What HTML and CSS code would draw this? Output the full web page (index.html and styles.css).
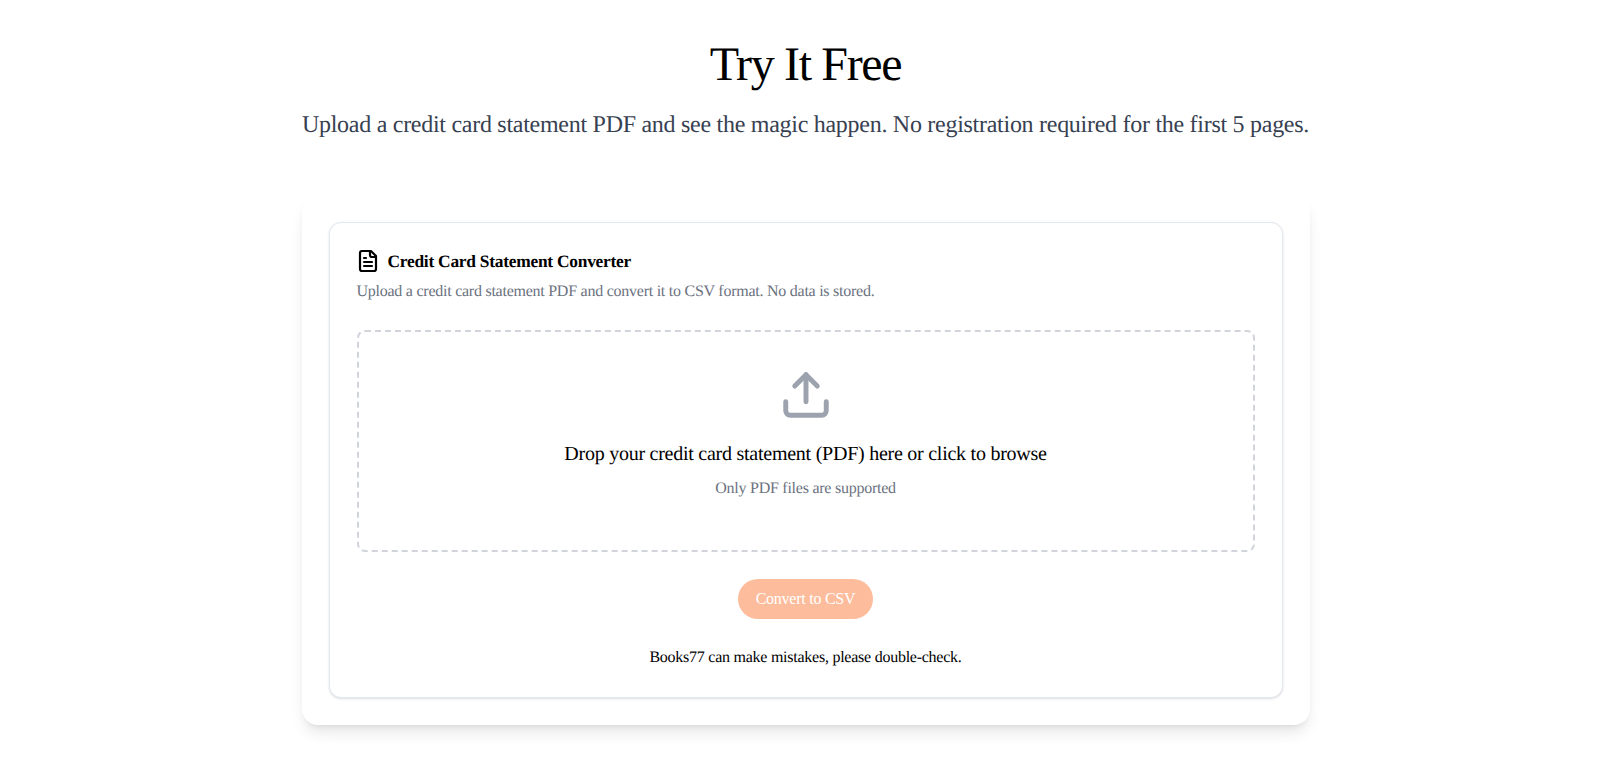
FILE: index.html
```html
<!DOCTYPE html>
<html lang="en">
<head>
<meta charset="utf-8">
<title>Try It Free</title>
<link rel="stylesheet" href="styles.css">
</head>
<body>
<main class="page">
  <header class="intro">
    <h1 class="title">Try It Free</h1>
    <p class="lead">Upload a credit card statement PDF and see the magic happen. No registration required for the first 5 pages.</p>
  </header>
  <section class="panel">
    <div class="card">
      <div class="card-head">
        <svg class="doc-icon" viewBox="0 0 24 24" fill="none" stroke="currentColor" stroke-width="2.2" stroke-linecap="round" stroke-linejoin="round" aria-hidden="true">
          <path d="M15 2H6a2 2 0 0 0-2 2v16a2 2 0 0 0 2 2h12a2 2 0 0 0 2-2V7Z"/>
          <path d="M14 2v4a2 2 0 0 0 2 2h4"/>
          <path d="M10 9H8"/>
          <path d="M16 13H8"/>
          <path d="M16 17H8"/>
        </svg>
        <h2 class="card-title">Credit Card Statement Converter</h2>
      </div>
      <p class="card-desc">Upload a credit card statement PDF and convert it to CSV format. No data is stored.</p>
      <div class="drop">
        <svg class="upload-icon" viewBox="0 0 24 24" fill="none" stroke="currentColor" stroke-width="2.2" stroke-linecap="round" stroke-linejoin="round" aria-hidden="true">
          <path d="M21 15v4a2 2 0 0 1-2 2H5a2 2 0 0 1-2-2v-4"/>
          <path d="M17 8l-5-5-5 5"/>
          <path d="M12 3v12"/>
        </svg>
        <p class="drop-main">Drop your credit card statement (PDF) here or click to browse</p>
        <p class="drop-sub">Only PDF files are supported</p>
      </div>
      <div class="actions"><button class="convert" type="button">Convert to CSV</button></div>
      <p class="note">Books77 can make mistakes, please double-check.</p>
    </div>
  </section>
</main>
</body>
</html>
```
FILE: styles.css
```css
* { box-sizing: border-box; }
html, body { margin: 0; background: #fff; }
body { font-family: "Liberation Serif", "Times New Roman", serif; color: #000; height: 777px; overflow: hidden; text-rendering: geometricPrecision; letter-spacing: -0.25px; }
.page { width: 1597px; padding: 37px 0 0 14px; display: flex; flex-direction: column; align-items: center; }
.intro { text-align: center; }
.title { margin: 0; font-size: 48px; line-height: 56px; font-weight: 400; letter-spacing: -1.35px; }
.lead { margin: 16px 0 0; font-size: 24px; line-height: 32px; color: #374151; white-space: nowrap; letter-spacing: -0.277px; }
.panel { margin-top: 54px; width: 1008px; padding: 27px; border-radius: 16px; background: #fff; box-shadow: 0 10px 15px -3px rgba(0,0,0,.1), 0 4px 6px -4px rgba(0,0,0,.1); }
.card { border: 1px solid #e2e8f0; border-radius: 12px; background: #fff; padding: 26px 27px 27px; box-shadow: 0 1px 3px rgba(0,0,0,.1), 0 1px 2px -1px rgba(0,0,0,.1); }
.card-head { display: flex; align-items: center; gap: 8px; margin-left: -1px; }
.doc-icon { width: 24px; height: 24px; flex: none; }
.card-title { margin: 0; font-size: 17.4px; line-height: 24px; font-weight: 700; }
.card-desc { margin: 7px 0 0; font-size: 16px; line-height: 24px; color: #6b7280; }
.drop { margin-top: 26px; height: 222px; border: 2px dashed #d1d5db; border-radius: 8px; display: flex; flex-direction: column; align-items: center; padding-top: 36px; }
.upload-icon { width: 54px; height: 54px; flex: none; color: #9ca3af; }
.drop-main { margin: 18px 0 0; font-size: 20px; line-height: 28px; }
.drop-sub { margin: 9px 0 0; font-size: 16px; line-height: 24px; color: #6b7280; }
.actions { margin-top: 27px; display: flex; justify-content: center; }
.convert { width: 135px; height: 40px; border: 0; border-radius: 20px; background: #fdbc9c; color: #fff; font: 16px "Liberation Serif", serif; letter-spacing: -0.25px; padding: 0; }
.note { margin: 27px 0 0; text-align: center; font-size: 16px; line-height: 24px; }
```
